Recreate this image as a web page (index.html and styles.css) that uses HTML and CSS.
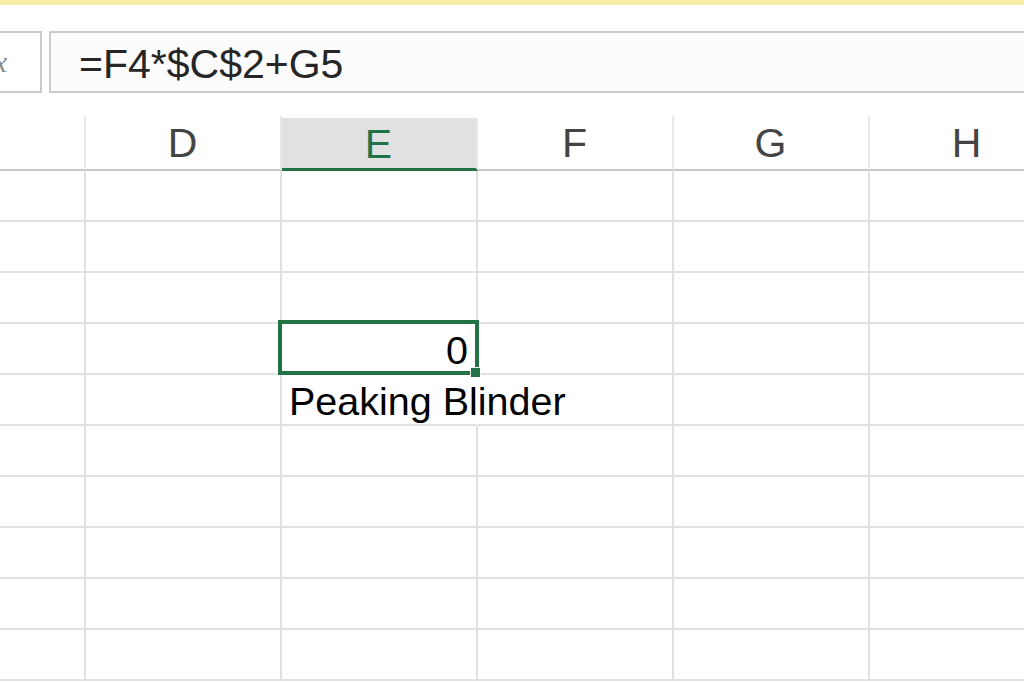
FILE: index.html
```html
<!DOCTYPE html>
<html lang="en">
<head>
  <meta charset="UTF-8" />
  <title>Sheet1 - Excel</title>
  <link rel="stylesheet" href="styles.css">
</head>
<body>
  <div class="titlebar"></div>

  <!-- Formula bar -->
  <div class="formula-row">
    <div class="fx-box"><span class="fx">fx</span></div>
    <div class="formula-input">=F4*$C$2+G5</div>
  </div>

  <!-- Grid -->
  <div class="sheet">
    <div class="row header">
      <div class="cell col-c"></div>
      <div class="cell">D</div>
      <div class="cell active">E</div>
      <div class="cell">F</div>
      <div class="cell">G</div>
      <div class="cell">H</div>
    </div>
    <div class="row">
      <div class="cell col-c"></div><div class="cell"></div><div class="cell"></div><div class="cell"></div><div class="cell"></div><div class="cell"></div>
    </div>
    <div class="row">
      <div class="cell col-c"></div><div class="cell"></div><div class="cell"></div><div class="cell"></div><div class="cell"></div><div class="cell"></div>
    </div>
    <div class="row">
      <div class="cell col-c"></div><div class="cell"></div><div class="cell"></div><div class="cell"></div><div class="cell"></div><div class="cell"></div>
    </div>
    <div class="row">
      <div class="cell col-c"></div><div class="cell"></div>
      <div class="cell num selected">0</div>
      <div class="cell"></div><div class="cell"></div><div class="cell"></div>
    </div>
    <div class="row">
      <div class="cell col-c"></div><div class="cell"></div>
      <div class="cell spill">Peaking Blinder</div>
      <div class="cell"></div><div class="cell"></div><div class="cell"></div>
    </div>
    <div class="row">
      <div class="cell col-c"></div><div class="cell"></div><div class="cell"></div><div class="cell"></div><div class="cell"></div><div class="cell"></div>
    </div>
    <div class="row">
      <div class="cell col-c"></div><div class="cell"></div><div class="cell"></div><div class="cell"></div><div class="cell"></div><div class="cell"></div>
    </div>
    <div class="row">
      <div class="cell col-c"></div><div class="cell"></div><div class="cell"></div><div class="cell"></div><div class="cell"></div><div class="cell"></div>
    </div>
    <div class="row">
      <div class="cell col-c"></div><div class="cell"></div><div class="cell"></div><div class="cell"></div><div class="cell"></div><div class="cell"></div>
    </div>
    <div class="row">
      <div class="cell col-c"></div><div class="cell"></div><div class="cell"></div><div class="cell"></div><div class="cell"></div><div class="cell"></div>
    </div>
  </div>
</body>
</html>
```

FILE: styles.css
```css
html, body {
  margin: 0;
  padding: 0;
  background: #fff;
  overflow: hidden;
  font-family: "Liberation Sans", Arial, sans-serif;
}

/* Yellow strip at the very top */
.titlebar {
  height: 5px;
  background: #f8eea6;
}

/* Formula bar */
.formula-row {
  display: flex;
  gap: 7px;
  margin-top: 26px;
  height: 62px;
}

.fx-box {
  box-sizing: border-box;
  width: 62px;
  margin-left: -20px;
  border: 2px solid #cbcbcb;
  padding-right: 33px;
  display: flex;
  justify-content: flex-end;
  align-items: center;
}
.fx {
  font-family: "Liberation Serif", serif;
  font-style: italic;
  font-size: 30px;
  color: #8a8a8a;
}

.formula-input {
  box-sizing: border-box;
  flex: 1;
  margin-right: -20px;
  border: 2px solid #cbcbcb;
  background: #fcfcfc;
  padding: 4px 0 0 28px;
  display: flex;
  align-items: center;
  font-size: 41px;
  color: #262626;
}

/* Worksheet grid */
.sheet {
  margin-top: 23px;
}

.row {
  display: grid;
  grid-template-columns: 86px repeat(5, 196px);
  height: 51px;
}

.cell {
  box-sizing: border-box;
  border-right: 2px solid #e1e1e1;
  border-bottom: 2px solid #e1e1e1;
  display: flex;
  align-items: flex-end;
  padding: 0 8px 0 7px;
  font-size: 39.5px;
  color: #000;
  white-space: nowrap;
  position: relative;
}

/* Column headers */
.header {
  height: 55px;
}
.header .cell {
  justify-content: center;
  align-items: center;
  padding-top: 2px;
  font-size: 41px;
  color: #444;
  border-right-color: #e8e8e8;
  border-bottom-color: #c6c6c6;
}
.header .cell.active {
  background: #e1e1e1;
  color: #217346;
  border-bottom: 3px solid #217346;
  margin-top: 2px;
}

/* Number cells are right aligned */
.num {
  justify-content: flex-end;
}

/* Text that runs into the next column hides the gridline */
.spill {
  border-right-color: transparent;
}

/* Active cell outline + fill handle */
.selected::after {
  content: "";
  position: absolute;
  top: -4px;
  left: -4px;
  right: -3px;
  bottom: -2px;
  border: 4px solid #217346;
}
.selected::before {
  content: "";
  position: absolute;
  right: -5px;
  bottom: -5px;
  width: 9px;
  height: 9px;
  background: #217346;
  border: 1px solid #fff;
  z-index: 1;
}
```
